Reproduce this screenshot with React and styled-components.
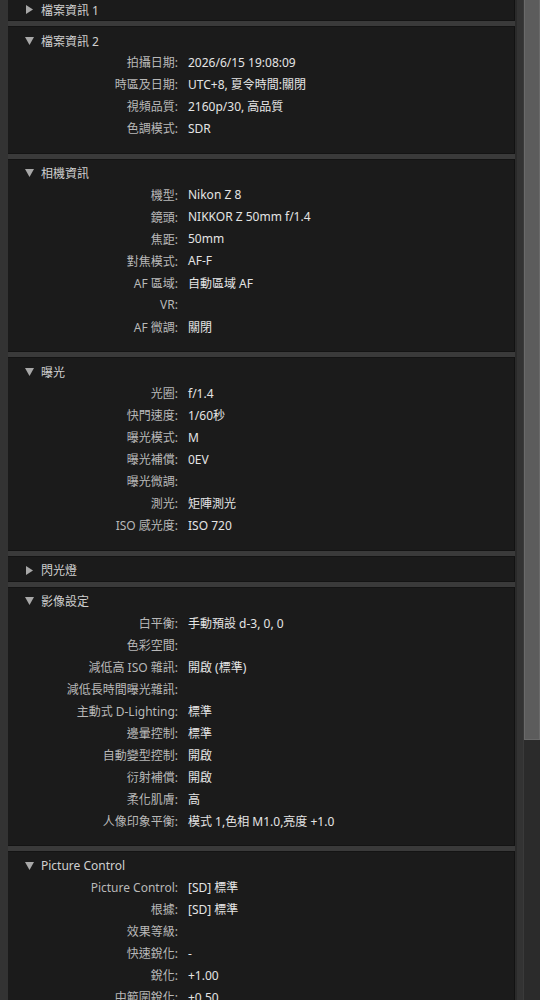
import styled, { createGlobalStyle } from "styled-components";

const GlobalStyle = createGlobalStyle`
  html, body {
    margin: 0;
    padding: 0;
    background: #333333;
  }
  body {
    font-family: "Noto Sans", "Noto Sans CJK TC", sans-serif;
    font-size: 12px;
  }
`;

const SECTIONS = [
  { title: "檔案資訊 1", open: false, rows: [] },
  {
    title: "檔案資訊 2",
    open: true,
    rows: [
      ["拍攝日期:", "2026/6/15 19:08:09"],
      ["時區及日期:", "UTC+8, 夏令時間:關閉"],
      ["視頻品質:", "2160p/30, 高品質"],
      ["色調模式:", "SDR"],
    ],
  },
  {
    title: "相機資訊",
    open: true,
    rows: [
      ["機型:", "Nikon Z 8"],
      ["鏡頭:", "NIKKOR Z 50mm f/1.4"],
      ["焦距:", "50mm"],
      ["對焦模式:", "AF-F"],
      ["AF 區域:", "自動區域 AF"],
      ["VR:", ""],
      ["AF 微調:", "關閉"],
    ],
  },
  {
    title: "曝光",
    open: true,
    rows: [
      ["光圈:", "f/1.4"],
      ["快門速度:", "1/60秒"],
      ["曝光模式:", "M"],
      ["曝光補償:", "0EV"],
      ["曝光微調:", ""],
      ["測光:", "矩陣測光"],
      ["ISO 感光度:", "ISO 720"],
    ],
  },
  { title: "閃光燈", open: false, rows: [] },
  {
    title: "影像設定",
    open: true,
    rows: [
      ["白平衡:", "手動預設 d-3, 0, 0"],
      ["色彩空間:", ""],
      ["減低高 ISO 雜訊:", "開啟 (標準)"],
      ["減低長時間曝光雜訊:", ""],
      ["主動式 D-Lighting:", "標準"],
      ["邊暈控制:", "標準"],
      ["自動變型控制:", "開啟"],
      ["衍射補償:", "開啟"],
      ["柔化肌膚:", "高"],
      ["人像印象平衡:", "模式 1,色相 M1.0,亮度 +1.0"],
    ],
  },
  {
    title: "Picture Control",
    open: true,
    rows: [
      ["Picture Control:", "[SD] 標準"],
      ["根據:", "[SD] 標準"],
      ["效果等級:", ""],
      ["快速銳化:", "-"],
      ["銳化:", "+1.00"],
      ["中範圍銳化:", "+0.50"],
    ],
  },
];

const Arrow = ({ open }) => (
  <ArrowBox>
    {open ? (
      <svg width="9" height="8" viewBox="0 0 9 8">
        <polygon points="0,0 9,0 4.5,8" fill="#a8a8a8" />
      </svg>
    ) : (
      <svg width="7" height="9" viewBox="0 0 7 9">
        <polygon points="0,0 7,4.5 0,9" fill="#a8a8a8" />
      </svg>
    )}
  </ArrowBox>
);

const Section = ({ title, open, rows }) => (
  <Panel $open={open}>
    <Header>
      <Arrow open={open} />
      <HeaderTitle>{title}</HeaderTitle>
    </Header>
    {open && (
      <Rows>
        {rows.map(([label, value]) => (
          <Row key={label}>
            <Label>{label}</Label>
            <Value>{value}</Value>
          </Row>
        ))}
      </Rows>
    )}
  </Panel>
);

const App = () => (
  <>
    <GlobalStyle />
    <Window>
      <Content>
        <Stack>
          {SECTIONS.map((s) => (
            <Section key={s.title} {...s} />
          ))}
        </Stack>
      </Content>
      <Gutter />
      <ScrollBar>
        <Thumb />
      </ScrollBar>
    </Window>
  </>
);

const Window = styled.div`
  display: flex;
  width: 540px;
  height: 1000px;
  overflow: hidden;
  background: #333333;
`;

const Content = styled.div`
  width: 507px;
  padding-left: 8px;
  overflow: hidden;
`;

const Stack = styled.div`
  display: flex;
  flex-direction: column;
  gap: 5px;
  margin-top: -5px;
  background: #3a3a3a;
`;

const Panel = styled.div`
  background: #1b1b1b;
  border-top: 1px solid #141414;
  border-bottom: 1px solid #141414;
  border-right: 1px solid #121212;
  padding: 3px 0 ${(p) => (p.$open ? "13.5px" : "0")};
`;

const Header = styled.div`
  display: flex;
  align-items: center;
  height: 21px;
  padding-left: 17px;
`;

const ArrowBox = styled.span`
  display: flex;
  align-items: center;
  justify-content: center;
  width: 9px;
  margin-right: 7px;
`;

const HeaderTitle = styled.span`
  color: #cfcfcf;
  font-size: 12px;
`;

const Rows = styled.div`
  display: flex;
  flex-direction: column;
`;

const Row = styled.div`
  display: grid;
  grid-template-columns: 170px 1fr;
  column-gap: 10px;
  height: 22px;
  align-items: center;
  white-space: nowrap;
`;

const Label = styled.span`
  text-align: right;
  color: #b8b8b8;
`;

const Value = styled.span`
  color: #e4e4e4;
`;

const Gutter = styled.div`
  width: 8px;
  background: #333333;
  border-left: 2px solid #2a2a2a;
  box-sizing: border-box;
`;

const ScrollBar = styled.div`
  width: 17px;
  background: #2b2b2b;
  border-left: 1px solid #3a3a3a;
  box-sizing: border-box;
`;

const Thumb = styled.div`
  height: 740px;
  background: #5c5c5c;
  border: 1px solid #6a6a6a;
  border-top: none;
  box-sizing: border-box;
`;

export default App;
